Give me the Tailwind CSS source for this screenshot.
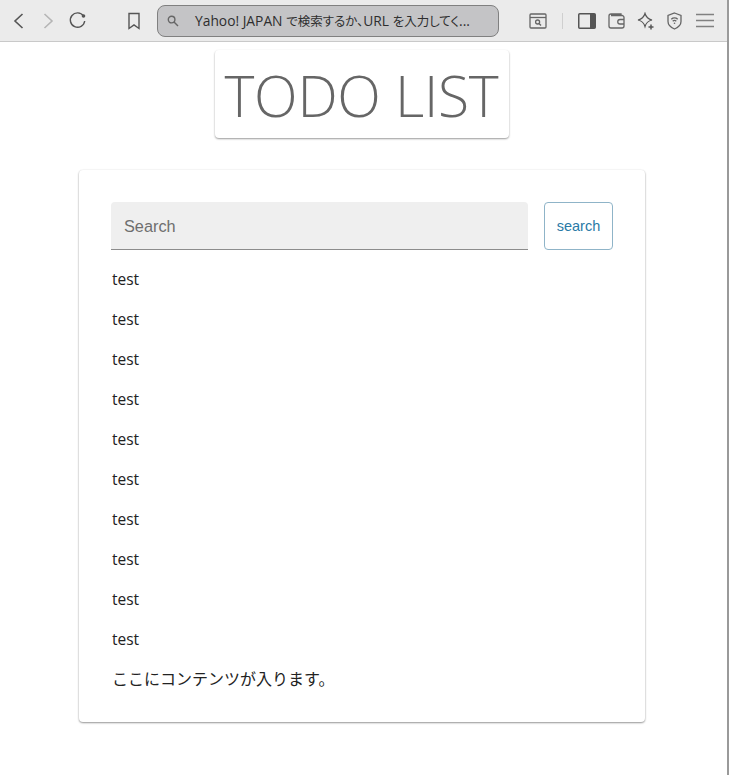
<!DOCTYPE html>
<html lang="ja">
<head>
  <meta charset="UTF-8">
  <meta name="viewport" content="width=device-width, initial-scale=1">
  <title>TODO LIST</title>
  <script src="https://cdn.jsdelivr.net/npm/@tailwindcss/browser@4"></script>
</head>
<body class="bg-white h-[775px] overflow-hidden font-['Open_Sans','Noto_Sans_CJK_JP',sans-serif] border-r-2 border-[#9a9a9a]">

  <!-- browser toolbar -->
  <div class="h-[42px] bg-[#ebebeb] border-b border-[#c9c9c9] flex items-center text-[#5b5b5b]">
    <div class="w-[157px] shrink-0 flex items-center">
      <svg class="ml-[12px] w-[13px] h-[18px]" viewBox="0 0 13 18" fill="none" stroke="#555" stroke-width="1.6"><path d="M10.5 2 3 9l7.5 7"/></svg>
      <svg class="ml-[17px] w-[13px] h-[18px]" viewBox="0 0 13 18" fill="none" stroke="#b5b5b5" stroke-width="1.6"><path d="M2.5 2 10 9l-7.5 7"/></svg>
      <svg class="ml-[13px] w-[19px] h-[19px]" viewBox="0 0 19 19" fill="none" stroke="#555" stroke-width="1.4"><path d="M15.500 5A7.200 7.200 0 1 0 16.700 10"/><circle cx="15.500" cy="5" r="1.800" fill="#555" stroke="none"/></svg>
      <svg class="ml-[40px] w-[14px] h-[18px]" viewBox="0 0 14 18" fill="none" stroke="#555" stroke-width="1.4"><path d="M2 1.500h10v15l-5-3.600-5 3.600z"/></svg>
    </div>
    <div class="w-[342px] h-[32px] shrink-0 mt-[1px] rounded-[8px] border border-[#808080] bg-[#c4c4c6] flex items-center">
      <svg class="ml-[9px] w-[12px] h-[12px]" viewBox="0 0 12 12" fill="none" stroke="#666" stroke-width="1.400"><circle cx="4.600" cy="4.600" r="3.300"/><path d="m7 7 4 4"/></svg>
      <span class="ml-[16px] text-[13.800px] text-[#2e2e2e] whitespace-nowrap">Yahoo! JAPAN <span class="text-[12.500px] [font-feature-settings:'palt']">で検索するか、</span>URL <span class="text-[12.500px] [font-feature-settings:'palt']">を入力してく</span>...</span>
    </div>
    <div class="flex items-center">
      <svg class="ml-[30px] w-[18px] h-[16px]" viewBox="0 0 18 16" fill="none" stroke="#666" stroke-width="1.300"><rect x="1" y="1" width="16" height="14" rx="1"/><path d="M1 4.500h16"/><circle cx="8.600" cy="9" r="2"/><path d="m10 10.500 2 2" stroke-width="1.500"/></svg>
      <div class="ml-[15px] w-[1px] h-[16px] bg-[#cfcfcf]"></div>
      <svg class="ml-[15px] w-[18px] h-[16px]" viewBox="0 0 18 16"><rect x=".75" y=".75" width="16.500" height="14.500" rx="1" fill="none" stroke="#555" stroke-width="1.500"/><path d="M12 1h5v14h-5z" fill="#555"/></svg>
      <svg class="ml-[12px] w-[17px] h-[16px]" viewBox="0 0 17 16" fill="none" stroke="#666" stroke-width="1.300"><path d="M13 2.500V1H3a2 2 0 0 0-2 2v10a2 2 0 0 0 2 2h11a2 2 0 0 0 2-2V4.500a2 2 0 0 0-2-2H3"/><path d="M16 6.500h-4a2 2 0 0 0 0 4.500h4"/></svg>
      <svg class="ml-[12px] w-[18px] h-[18px]" viewBox="0 0 18 18" fill="none" stroke="#555" stroke-width="1.200"><path d="M8 1.500c1 3.500 2.500 5.500 7 6.500-4.500 1-6 3-7 6.500C7 11 5.500 9 1 8c4.500-1 6-3 7-6.500z"/><path d="M14 12.500v5M11.500 15h5" stroke-width="1.500"/></svg>
      <svg class="ml-[12px] w-[15px] h-[18px]" viewBox="0 0 15 18" fill="none" stroke="#666" stroke-width="1.300"><path d="M7.500 1 14 3.500v6c0 3.500-3 6-6.500 7.500C4 15.500 1 13 1 9.500v-6z"/><path d="M4.300 7.300a4.600 4.600 0 0 1 6.400 0M5.700 9.200a2.600 2.600 0 0 1 3.600 0"/><circle cx="7.500" cy="11.300" r=".8" fill="#666" stroke="none"/></svg>
      <svg class="ml-[14px] w-[18px] h-[15px]" viewBox="0 0 18 15" stroke="#808080" stroke-width="1.400"><path d="M0 1.500h18M0 7.500h18M0 13.500h18"/></svg>
    </div>
  </div>

  <!-- page -->
  <div class="flex flex-col items-center pr-[3px]">
    <h1 class="mt-[8px] w-[294px] h-[88px] bg-white rounded-[4px] shadow-[0_1px_2px_rgba(0,0,0,0.4)] flex items-center justify-center pt-[3px] pr-[1px] text-[57px] tracking-[-0.300px] leading-none font-light text-[#666] whitespace-nowrap">TODO LIST</h1>

    <div class="mt-[32px] w-[566px] h-[552px] bg-white rounded-[4px] shadow-[0_1px_2px_rgba(0,0,0,0.4),0_0_2px_rgba(0,0,0,0.08)] pt-[32px] pl-[32px] pr-[32px]">
      <div class="flex gap-[16px]">
        <div class="w-[417px] h-[48px] bg-[#efefef] rounded-t-[4px] border-b border-[#8c8c8c] flex items-center pl-[13px] pt-[1px] font-['Liberation_Sans',sans-serif] text-[16.300px] text-[#6e6e6e]">Search</div>
        <button class="w-[69px] h-[48px] pt-[1px] rounded-[4px] border border-[#8fb4c8] bg-white text-[14.500px] text-[#2a7aa6] font-['Liberation_Sans',sans-serif]">search</button>
      </div>
      <ul class="mt-[10px] pl-[1px] text-[15.500px] text-[#222]">
        <li class="h-[40px] flex items-center">test</li>
        <li class="h-[40px] flex items-center">test</li>
        <li class="h-[40px] flex items-center">test</li>
        <li class="h-[40px] flex items-center">test</li>
        <li class="h-[40px] flex items-center">test</li>
        <li class="h-[40px] flex items-center">test</li>
        <li class="h-[40px] flex items-center">test</li>
        <li class="h-[40px] flex items-center">test</li>
        <li class="h-[40px] flex items-center">test</li>
        <li class="h-[40px] flex items-center">test</li>
        <li class="h-[38px] flex items-center text-[16px]">ここにコンテンツが入ります。</li>
      </ul>
    </div>
  </div>
</body>
</html>
